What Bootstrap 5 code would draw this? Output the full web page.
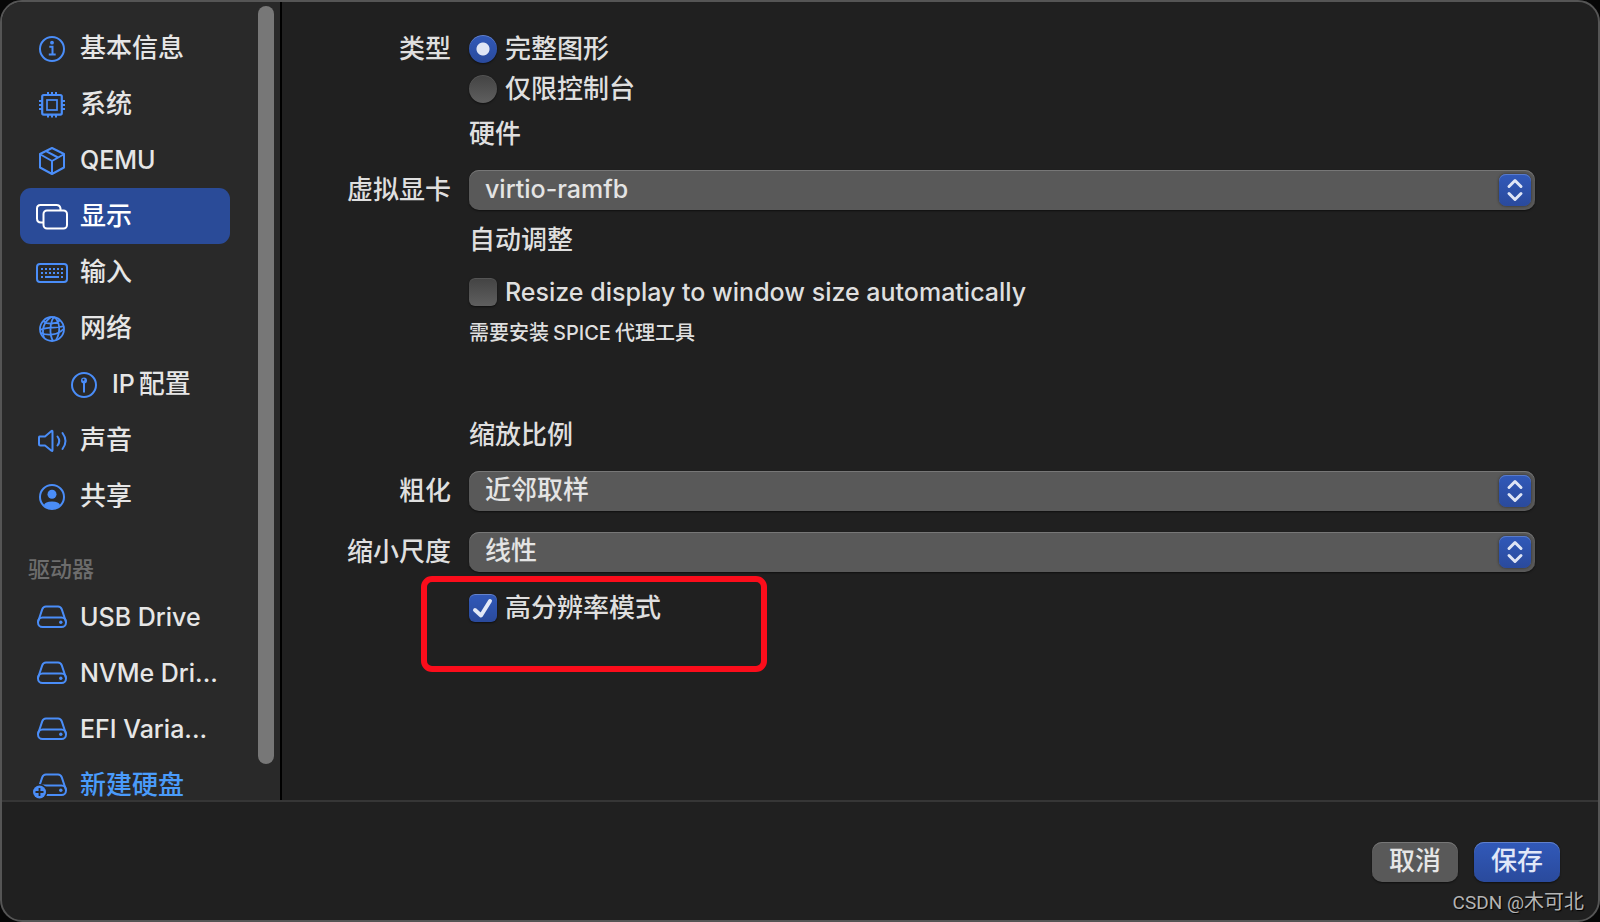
<!DOCTYPE html>
<html lang="zh-CN" data-bs-theme="dark">
<head>
<meta charset="utf-8">
<meta name="viewport" content="width=device-width, initial-scale=1">
<title>显示</title>
<link href="https://cdn.jsdelivr.net/npm/bootstrap@5.3.0/dist/css/bootstrap.min.css" rel="stylesheet">
<style>
  body { background: #070707; color: #dfdfdf; font: 500 26px/40px Inter, "Noto Sans CJK SC", sans-serif; }
  .window { background: #202020; border: 2px solid #555; border-radius: 22px; }
  .upper { min-height: 0; }
  .latin { font-size: 25px; }

  /* sidebar */
  .sidebar { width: 280px; background: #292929; border-right: 2px solid #000; }
  .side-list { width: 210px; margin: 18px 0 0 18px; }
  .side-list .nav-link { display: flex; flex: none; align-items: center; height: 56px; padding: 0 12px 0 16px; gap: 12px; border-radius: 11px; color: #e6e6e6; font-weight: 500; white-space: nowrap; }
  .side-list .nav-link svg { width: 32px; height: 32px; flex: none; overflow: visible; color: #4a8df8; }
  .side-list .nav-link.active { background: #2a4b98; color: #fff; }
  .side-list .nav-link.active svg { color: #fff; }
  .side-list .nav-link.nested { padding-left: 48px; }
  .side-list .nav-link.create { color: #4a9bfa; }
  .side-heading { flex: none; font-size: 22px; line-height: 24px; margin: 33px 0 8px 8px; color: #6d6d6d; font-weight: 500; }
  .scroll-thumb { width: 16px; height: 95%; margin: 4px 6px 0 0; background: #777; border-radius: 8px; }

  /* settings form */
  .settings { padding: 27px 63px 0 0; }
  .field { display: grid; grid-template-columns: 169px minmax(0, 1fr); column-gap: 18px; }
  .field-name { grid-column: 1; text-align: right; }
  .field-body { grid-column: 2; }
  .space-sm { margin-top: 5px; }
  .space-md { margin-top: 10px; }
  .space-check { margin-top: 12px; }
  .space-lg { margin-top: 16px; }
  .space-xl { margin-top: 21px; }
  .space-group { margin-top: 66px; }
  .field .form-check { display: flex; align-items: center; gap: 8px; min-height: 40px; padding: 0; margin-bottom: 0; }
  .field .form-check-input { width: 28px; height: 28px; margin: 0; float: none; border: 0; background-color: #555; background-image: linear-gradient(#434343, #5f5f5f); box-shadow: 0 1px 2px #0008, inset 0 1px 0 #ffffff18; }
  .field .form-check-input[type=checkbox] { border-radius: 6px; }
  .field .form-check-input:checked { background-color: #2b4fa8; background-size: 100% 100%; box-shadow: 0 1px 2px #0008, inset 0 1px 0 #ffffff40; }
  .field .form-check-input[type=radio]:checked { background-image: radial-gradient(circle, #dfe5f5 6px, transparent 7px), linear-gradient(#3159b9, #2a4a9c); }
  .field .form-check-input[type=checkbox]:checked { background-image: url("data:image/svg+xml,%3Csvg xmlns='http://www.w3.org/2000/svg' viewBox='0 0 28 28'%3E%3Cpath d='M6 16l6 5.500L21 7' fill='none' stroke='%23e2e8f7' stroke-width='4' stroke-linecap='round' stroke-linejoin='round'/%3E%3C/svg%3E"), linear-gradient(#3159b9, #2a4a9c); }
  .field .form-select { height: 40px; padding: 0 48px 2px 16px; border: 0; border-radius: 10px; background: #595959; color: #e4e4e4; font-size: 26px; font-weight: 500; line-height: 38px; box-shadow: inset 0 1px 0 #777, 0 1px 2px #0008; }
  .field .form-select.latin { font-size: 25px; }
  .stepper { width: 32px; height: 32px; right: 4px; top: 4px; border-radius: 7px; background: linear-gradient(#3159b9, #2a4a9c); box-shadow: 0 0 3px #0008, inset 0 1px 0 #5a7ccb; pointer-events: none; }
  .hint { font-size: 20px; line-height: 32px; }
  .highlight { left: -48px; top: -12px; width: 346px; height: 96px; border: 6px solid #fb0d1b; border-radius: 11px; pointer-events: none; }

  /* footer */
  .actions { height: 120px; padding: 2px 38px 0; border-top: 2px solid #363636; }
  .actions .btn { width: 86px; height: 40px; padding: 0 0 2px; border: 0; border-radius: 10px; font-size: 26px; font-weight: 500; line-height: 38px; color: #e6e6e6; background: #595959; box-shadow: inset 0 1px 0 #777, 0 1px 2px #0008; }
  .actions .btn-primary { color: #e0e7f8; background: linear-gradient(#3159b9, #2a4a9c); box-shadow: inset 0 1px 0 #6080cc, 0 1px 2px #0008; }
  .watermark { right: 14px; bottom: 2px; font: 400 19px/30px Roboto, "Noto Sans CJK SC", sans-serif; color: #b4b4b4; text-shadow: 1px 1px 1px #000; }
  .watermark span { font-size: 20px; }
</style>
</head>
<body>
<svg class="d-none" xmlns="http://www.w3.org/2000/svg">
  <symbol id="drive" viewBox="0 0 32 32">
    <g fill="none" stroke="currentColor" stroke-width="2"><path d="M2 21 6.200 8.400Q7.200 5.500 10 5.500H22Q24.800 5.500 25.800 8.400L30 21"/><rect x="2" y="16.500" width="28" height="9.500" rx="4.500"/></g><circle cx="24.800" cy="21.300" r="1.700" fill="currentColor"/>
  </symbol>
  <symbol id="updown" viewBox="0 0 32 32"><path d="m10 12.500 6-6 6 6M10 19.500l6 6 6-6" fill="none" stroke="#dfe5f5" stroke-width="3" stroke-linecap="round" stroke-linejoin="round"/></symbol>
</svg>

<div class="window vh-100 d-flex flex-column position-relative overflow-hidden">
  <div class="upper flex-grow-1 d-flex">
    <aside class="sidebar flex-shrink-0 d-flex justify-content-between overflow-hidden">
      <nav class="side-list nav flex-column flex-nowrap">
        <a class="nav-link" href="#"><svg viewBox="0 0 32 32" fill="none" stroke="currentColor" stroke-width="2"><circle cx="16" cy="17" r="12"/><path d="M13.300 14.800h3.200v7.400M12.800 22.400h6.900"/><circle cx="16" cy="10.700" r="1.900" fill="currentColor" stroke="none"/></svg>基本信息</a>
        <a class="nav-link" href="#"><svg viewBox="0 0 32 32" fill="none" stroke="currentColor" stroke-width="2"><rect x="6.200" y="7" width="19.600" height="19.600" rx="1.500" stroke-width="2.200"/><rect x="11" y="12" width="10" height="10" stroke-width="1.700"/><path d="M12 7V4M16 7V4M20 7V4M12 27v2.500M16 27v2.500M20 27v2.500M6 13H3M6 17H3M6 21H3M26 13h3M26 17h3M26 21h3"/></svg>系统</a>
        <a class="nav-link" href="#"><svg viewBox="0 0 32 32" fill="none" stroke="currentColor" stroke-width="2" stroke-linejoin="round"><path d="M16 4 28 10V23.500L16 30 4 23.500V10ZM4.500 10.500 16 17 27.500 10.500M16 17V30M10 7.200l12 6.300"/></svg><span class="latin">QEMU</span></a>
        <a class="nav-link active" aria-current="page" href="#"><svg viewBox="0 0 32 32" fill="none" stroke="currentColor" stroke-width="2"><rect x="7.500" y="10.500" width="23.500" height="18" rx="3.500"/><path d="M7.500 22.500H5Q1 22.500 1 18.500V8.500Q1 5 4.500 5H20.500Q24 5 24.500 8.500V10"/></svg>显示</a>
        <a class="nav-link" href="#"><svg viewBox="0 0 32 32" fill="none" stroke="currentColor" stroke-width="2"><rect x="1" y="8" width="30" height="18" rx="3"/><path d="M5 13h22M5 17h22" stroke-dasharray="2 2"/><path d="M5 21h2M9 21h14M25 21h2"/></svg>输入</a>
        <a class="nav-link" href="#"><svg viewBox="0 0 32 32" fill="none" stroke="currentColor" stroke-width="1.800"><circle cx="16" cy="17" r="12"/><path d="M15 5C8 10 5 16 8 26M18 5C14 10 13 22 17 29M18 5C24 9 25 20 20 28M7 9C12 13 20 12 24.500 8M4 18C12 14 19 17 28 14M5 21C12 24 22 23 27.500 17"/></svg>网络</a>
        <a class="nav-link nested" href="#"><svg viewBox="0 0 32 32" fill="none" stroke="currentColor" stroke-width="2"><circle cx="16" cy="17" r="12"/><path d="M16 14v10.500"/><circle cx="16" cy="12.500" r="3" fill="currentColor" stroke="none"/><circle cx="15.500" cy="11.800" r="1" fill="#292929" stroke="none"/></svg><span><span class="latin me-1">IP</span>配置</span></a>
        <a class="nav-link" href="#"><svg viewBox="0 0 32 32" fill="none" stroke="currentColor" stroke-width="2" stroke-linecap="round" stroke-linejoin="round"><path d="M3.500 12.500H9L15.500 7Q16.500 6.500 16.500 7.500V26Q16.500 27.500 15.500 26.800L9 21.500H4.500Q3 21.500 3 20V13.500Q3 12.500 3.500 12.500ZM21.500 12.500Q25 17 21.500 21.500M26.500 9Q32.500 17 26.500 25"/></svg>声音</a>
        <a class="nav-link" href="#"><svg viewBox="0 0 32 32" fill="none" stroke="currentColor" stroke-width="2"><circle cx="16" cy="17" r="12"/><circle cx="16" cy="14.300" r="4.500" fill="currentColor" stroke="none"/><path d="M8 25Q9 21.500 16 21.500T24 25Q21 29 16 29T8 25Z" fill="currentColor" stroke="none"/></svg>共享</a>
        <h2 class="side-heading">驱动器</h2>
        <a class="nav-link" href="#"><svg><use href="#drive"/></svg><span class="latin">USB Drive</span></a>
        <a class="nav-link" href="#"><svg><use href="#drive"/></svg><span class="latin">NVMe Dri...</span></a>
        <a class="nav-link" href="#"><svg><use href="#drive"/></svg><span class="latin">EFI Varia...</span></a>
        <a class="nav-link create" href="#"><svg viewBox="0 0 32 32"><use href="#drive"/><circle cx="3.500" cy="23" r="8" fill="#292929"/><circle cx="3.500" cy="23" r="6.500" fill="currentColor"/><path d="M-.5 23h8M3.500 19v8" stroke="#292929" stroke-width="1.800"/></svg>新建硬盘</a>
      </nav>
      <div class="scroll-thumb"></div>
    </aside>

    <main class="flex-grow-1 overflow-hidden">
      <form class="settings" id="display-form">
        <div class="field" role="radiogroup" aria-labelledby="type-name">
          <span class="field-name" id="type-name">类型</span>
          <div class="field-body">
            <div class="form-check"><input class="form-check-input" type="radio" name="kind" id="kind-full" checked><label for="kind-full">完整图形</label></div>
            <div class="form-check"><input class="form-check-input" type="radio" name="kind" id="kind-console"><label for="kind-console">仅限控制台</label></div>
          </div>
        </div>
        <div class="field space-sm"><div class="field-body">硬件</div></div>
        <div class="field space-lg">
          <label class="field-name" for="card-select">虚拟显卡</label>
          <div class="field-body position-relative">
            <select class="form-select latin" id="card-select"><option>virtio-ramfb</option></select>
            <svg class="stepper position-absolute"><use href="#updown"/></svg>
          </div>
        </div>
        <div class="field space-md"><div class="field-body">自动调整</div></div>
        <div class="field space-check"><div class="field-body form-check"><input class="form-check-input" type="checkbox" id="auto-resize"><label class="latin" for="auto-resize">Resize display to window size automatically</label></div></div>
        <div class="field space-sm"><div class="field-body hint">需要安装<span class="mx-1">SPICE</span>代理工具</div></div>
        <div class="field space-group"><div class="field-body">缩放比例</div></div>
        <div class="field space-lg">
          <label class="field-name" for="up-select">粗化</label>
          <div class="field-body position-relative">
            <select class="form-select" id="up-select"><option>近邻取样</option></select>
            <svg class="stepper position-absolute"><use href="#updown"/></svg>
          </div>
        </div>
        <div class="field space-xl">
          <label class="field-name" for="down-select">缩小尺度</label>
          <div class="field-body position-relative">
            <select class="form-select" id="down-select"><option>线性</option></select>
            <svg class="stepper position-absolute"><use href="#updown"/></svg>
          </div>
        </div>
        <div class="field space-lg">
          <div class="field-body form-check position-relative">
            <input class="form-check-input" type="checkbox" id="retina" checked><label for="retina">高分辨率模式</label>
            <div class="highlight position-absolute"></div>
          </div>
        </div>
      </form>
    </main>
  </div>
  <footer class="actions flex-shrink-0 d-flex align-items-center justify-content-end gap-3">
    <button type="button" class="btn btn-secondary">取消</button>
    <button type="submit" form="display-form" class="btn btn-primary">保存</button>
  </footer>
  <div class="watermark position-absolute">CSDN @<span>木可北</span></div>
</div>
<script src="https://cdn.jsdelivr.net/npm/bootstrap@5.3.0/dist/js/bootstrap.bundle.min.js"></script>
</body>
</html>
